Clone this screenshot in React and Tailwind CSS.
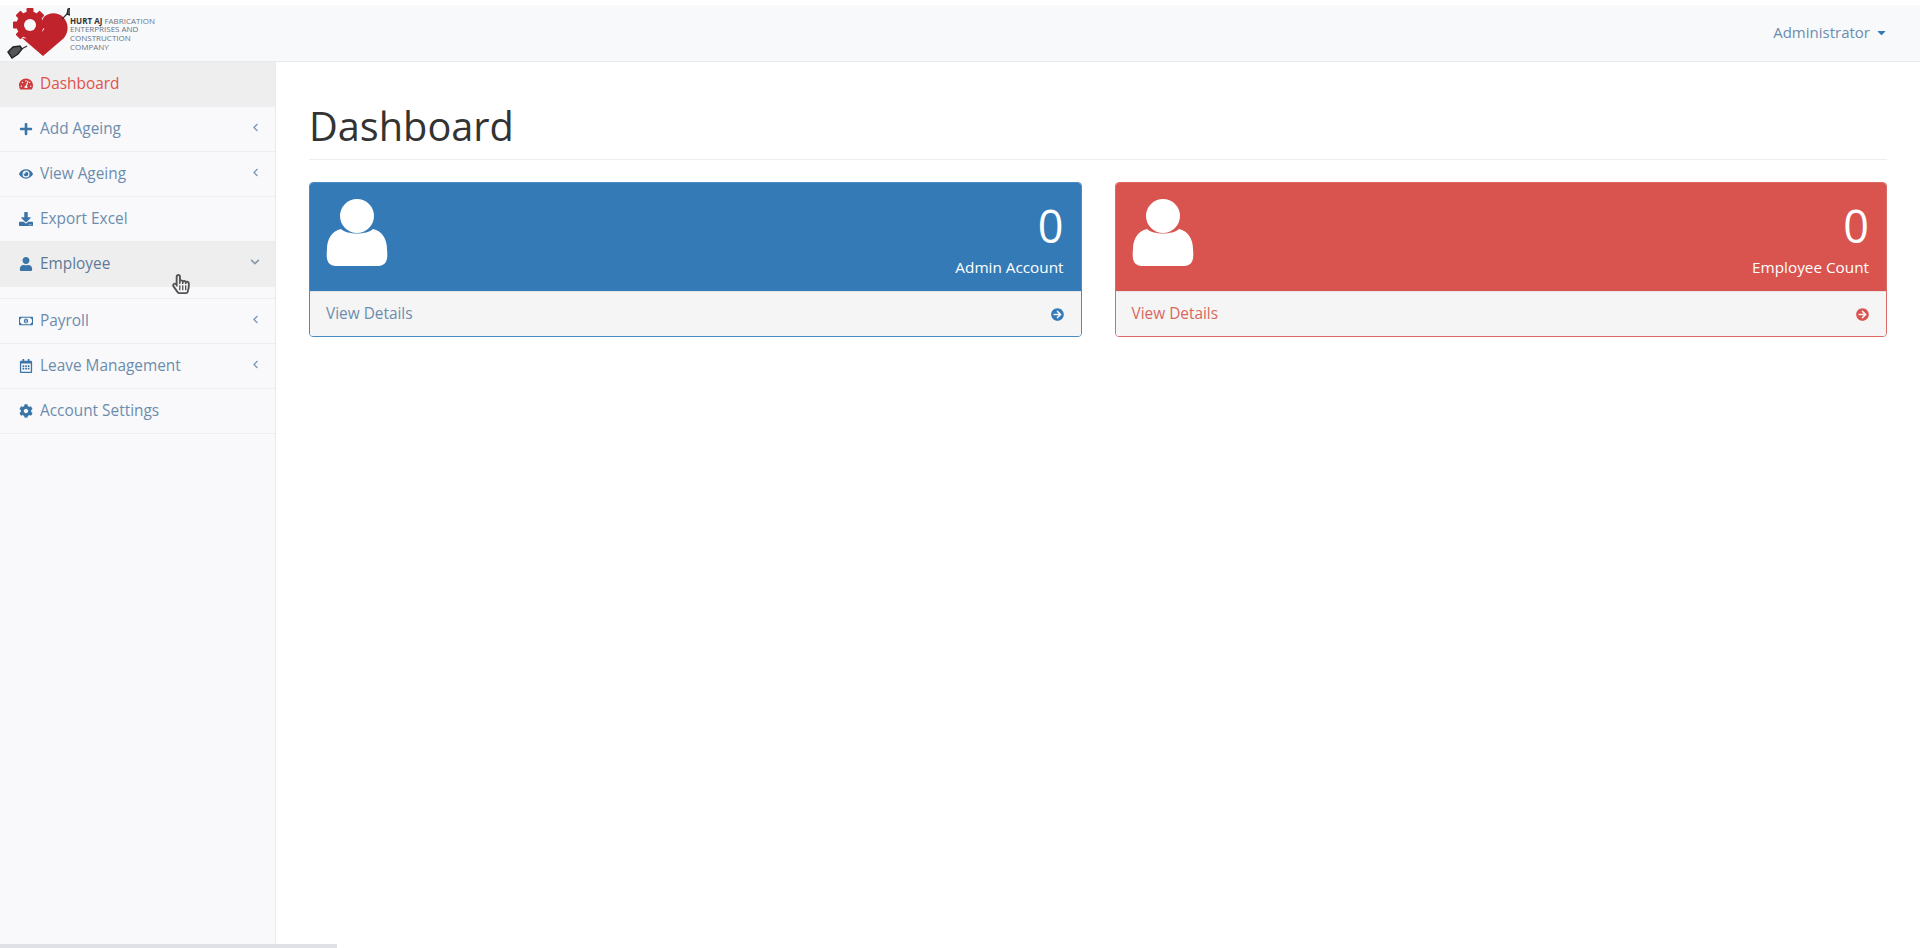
import React from "react";
import {
  FaTachometerAlt,
  FaPlus,
  FaEye,
  FaDownload,
  FaUser,
  FaRegMoneyBillAlt,
  FaRegCalendarAlt,
  FaCog,
  FaChevronLeft,
  FaChevronDown,
  FaArrowCircleRight,
  FaCaretDown,
  FaRegHandPointer,
} from "react-icons/fa";

const menu = [
  { label: "Dashboard", icon: FaTachometerAlt, active: true },
  { label: "Add Ageing", icon: FaPlus, arrow: "left" },
  { label: "View Ageing", icon: FaEye, arrow: "left" },
  { label: "Export Excel", icon: FaDownload },
  { label: "Employee", icon: FaUser, arrow: "down", open: true },
  { label: "Payroll", icon: FaRegMoneyBillAlt, arrow: "left" },
  { label: "Leave Management", icon: FaRegCalendarAlt, arrow: "left" },
  { label: "Account Settings", icon: FaCog },
];

const Logo = () => (
  <div className="flex items-center">
    <svg width="70" height="56" viewBox="0 0 70 56" className="shrink-0">
      {/* gear */}
      <g fill="#c0232c">
        <circle cx="30" cy="20" r="13.5" />
        <rect x="26.5" y="3" width="7" height="34" rx="1" />
        <rect x="13" y="16.5" width="34" height="7" rx="1" />
        <rect x="26.5" y="3" width="7" height="34" rx="1" transform="rotate(45 30 20)" />
        <rect x="26.5" y="3" width="7" height="34" rx="1" transform="rotate(-45 30 20)" />
      </g>
      <circle cx="30" cy="20" r="6" fill="#f8f9fb" />
      {/* heart */}
      <path
        d="M44 12 C49 7 58 7 63 12 C69 18 69 27 64 33 L43 51 L22 33 C28 34 36 33 41 28 C43 25 46 24 44 20 C42 17 42 14 44 12 Z"
        fill="#c0232c"
      />
      {/* arrows */}
      <path d="M62 14 L68 8" stroke="#333" strokeWidth="1.2" fill="none" />
      <path d="M67 9 L68 4 L74 2 L73 6 L70 10 Z" fill="#555" stroke="#222" strokeWidth="1.2" />
      <path d="M18 46 L27 41" stroke="#333" strokeWidth="1.4" />
      <path d="M8 47 L13 42 L20 41 L22 44 L18 49 L12 53 Z" fill="#555" stroke="#222" strokeWidth="1.4" />
    </svg>
    <div className="text-[8px] leading-[8.7px] text-[#6b7280] mt-[2px] whitespace-nowrap">
      <div>
        <span className="font-bold text-[#333]">HURT AJ</span> FABRICATION
      </div>
      <div>ENTERPRISES AND</div>
      <div>CONSTRUCTION</div>
      <div>COMPANY</div>
    </div>
  </div>
);

const MenuRow = ({ item }) => {
  const Icon = item.icon;
  const color = item.active
    ? "text-[#e0524c]"
    : item.open
      ? "text-[#5f7a97]"
      : "text-[#6c8cae]";
  const iconColor = item.active ? "text-[#cf3a3a]" : "text-[#3b75a8]";

  return (
    <div className={`border-b border-[#ecedf0] ${item.open ? "h-[57px]" : "h-[45px]"}`}>
      <div
        className={`flex items-center h-[45px] pl-[19px] pr-[15px] pb-[2px] ${
          item.active || item.open ? "bg-[#eeeeee]" : ""
        }`}
      >
        <span className={`w-[14px] flex justify-center mr-[7px] text-[14px] ${iconColor}`}>
          <Icon />
        </span>
        <span className={`text-[15.4px] ${color}`}>{item.label}</span>
        {item.arrow === "left" && (
          <FaChevronLeft className="ml-auto text-[9px] text-[#7d9ab8] -mt-[3px]" />
        )}
        {item.arrow === "down" && (
          <FaChevronDown className="ml-auto text-[10px] text-[#8c9aa8] -mt-[3px]" />
        )}
      </div>
    </div>
  );
};

const StatCard = ({ count, label, tone }) => {
  const red = tone === "red";
  return (
    <div
      className={`flex-1 rounded-[4px] border overflow-hidden ${
        red ? "border-[#dc6a66]" : "border-[#4a8bc4]"
      }`}
    >
      <div
        className={`flex justify-between h-[108px] pl-[15px] pr-[17px] text-white ${
          red ? "bg-[#d9534f]" : "bg-[#337ab7]"
        }`}
      >
        <svg width="64" height="68" viewBox="0 0 64 68" className="mt-[16px]">
          <circle cx="32" cy="17" r="17" fill="#fff" />
          <path
            d="M16 30 C22 36 42 36 48 30 C57 32 62 40 62 50 C63 60 62 66 54 67 L10 67 C2 66 1 60 2 50 C2 40 7 32 16 30 Z"
            fill="#fff"
          />
        </svg>
        <div className="text-right">
          <div className="text-[45px] leading-[49px] mt-[18px]">{count}</div>
          <div className="text-[15.3px] leading-[20px] mt-[7px]">{label}</div>
        </div>
      </div>
      <div
        className={`flex items-center justify-between h-[45px] pl-[16px] pr-[17px] bg-[#f5f5f5] border-t border-[#e4e4e4] text-[15.4px] ${
          red ? "text-[#d9685f]" : "text-[#6c8cae]"
        }`}
      >
        <span>View Details</span>
        <FaArrowCircleRight className={`text-[13px] ${red ? "text-[#d9534f]" : "text-[#337ab7]"}`} />
      </div>
    </div>
  );
};

export default function App() {
  return (
    <div className="relative h-[948px] overflow-hidden bg-white pt-[5px] font-['Open_Sans',sans-serif]">
      {/* Navbar */}
      <header className="flex items-center justify-between h-[57px] bg-[#f8f9fb] border-b border-[#e9eaec]">
        <Logo />
        <div className="flex items-center gap-[5px] pr-[32px] pb-[1px] text-[15px] text-[#6c8cae]">
          Administrator
          <FaCaretDown className="text-[13px] text-[#337ab7]" />
        </div>
      </header>

      <div className="flex h-[886px]">
        {/* Sidebar */}
        <aside className="w-[276px] shrink-0 bg-[#f9f9fb] border-r border-[#e9eaec]">
          {menu.map((item) => (
            <MenuRow key={item.label} item={item} />
          ))}
        </aside>

        {/* Main */}
        <main className="flex-1 pl-[33px] pr-[33px]">
          <h1 className="text-[39.7px] leading-[43px] text-[#333333] mt-[43px] pb-[11px] border-b border-[#eeeeee]">
            Dashboard
          </h1>
          <div className="flex gap-[33px] mt-[22px]">
            <StatCard count="0" label="Admin Account" tone="blue" />
            <StatCard count="0" label="Employee Count" tone="red" />
          </div>
        </main>
      </div>

      {/* Mouse cursor */}
      <FaRegHandPointer className="absolute left-[171px] top-[274px] text-[20px] text-[#555]" />
      {/* Horizontal scrollbar */}
      <div className="absolute left-0 bottom-0 w-[337px] h-[4px] bg-[#dfe1e6]" />
    </div>
  );
}
